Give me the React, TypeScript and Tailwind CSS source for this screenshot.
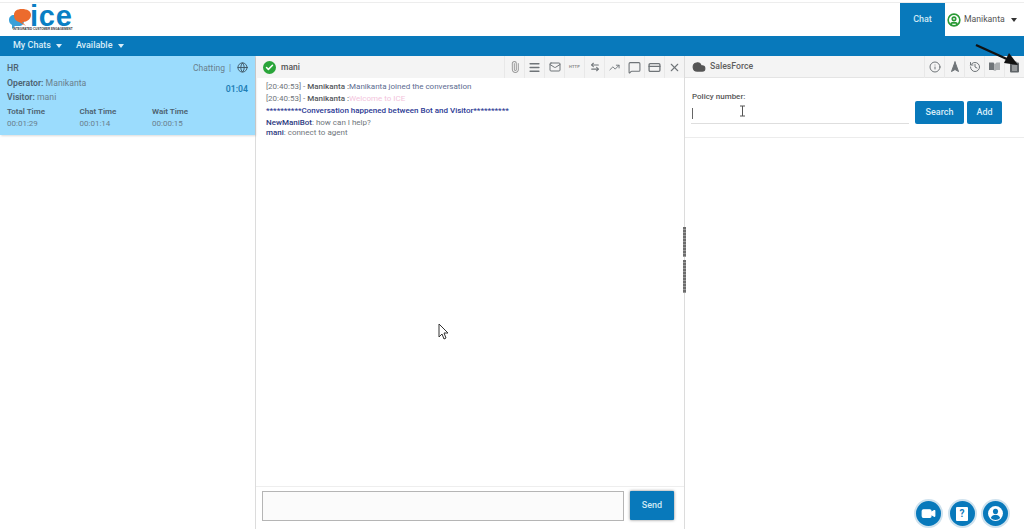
import {
  Paperclip,
  Menu,
  Mail,
  ArrowLeftRight,
  TrendingUp,
  MessageSquare,
  CreditCard,
  X,
  Globe,
  Info,
  Navigation2,
  History,
  Cloud,
  Check,
  CircleUser,
  Video,
} from "lucide-react";

function Caret({ className }: { className: string }) {
  return <span className={`inline-block h-0 w-0 border-x-[3.5px] border-t-[4px] border-x-transparent ${className}`} />;
}

function Logo() {
  return (
    <div className="relative ml-[9px] h-[32px] w-[68px]">
      <svg width="24" height="22" viewBox="0 0 24 22" className="absolute left-0 top-[5px]">
        <path d="M0 12c0-3 2-5 5-5h6c3 0 4 3 4 6s-2 5-5 5H6l-3 3 0-4c-2-1-3-3-3-5z" fill="#3aa0d8" />
        <path d="M5 7c0-4 3-6 8-6s9 2 9 6-4 7-8 7h-1l4 4-7-4c-3-1-5-3-5-7z" fill="#ec6b2d" />
      </svg>
      <span className="absolute left-[21px] top-0 font-['Liberation_Sans',sans-serif] text-[29px] font-bold leading-[26px] tracking-[0.8px] text-[#0a7fc4]">
        ice
      </span>
      <span className="absolute left-[4px] top-[25px] whitespace-nowrap font-['Liberation_Sans',sans-serif] text-[3px] font-bold leading-[3px] text-[#333]">
        INTEGRATED CUSTOMER ENGAGEMENT
      </span>
    </div>
  );
}

function Toolbtn({ children }: { children: React.ReactNode }) {
  return <div className="flex h-[22px] w-[20px] items-center justify-center border-l border-[#e8e8e8] text-[#6f7478]">{children}</div>;
}

function Stat({ label, value }: { label: string; value: string }) {
  return (
    <div className="w-[72.5px]">
      <div className="text-[8px] font-semibold leading-[12px] text-[#4d6270]">{label}</div>
      <div className="text-[8px] leading-[12px] text-[#6a808e]">{value}</div>
    </div>
  );
}

function RoundBtn({ children }: { children: React.ReactNode }) {
  return (
    <div className="flex h-[29px] w-[29px] items-center justify-center rounded-full border-2 border-[#cfe2ee] bg-[#0879bb] text-white">
      {children}
    </div>
  );
}

export default function App() {
  return (
    <div className="relative flex h-[529px] w-[1024px] flex-col overflow-hidden bg-white pt-[2px] font-['Roboto',sans-serif]">
      <header className="flex h-[34px] items-stretch border-t border-[#ededed]">
        <Logo />
        <div className="flex-1" />
        <div className="flex w-[45px] items-center justify-center bg-[#0879bb] text-[9px] font-medium text-[#cfe8f5]">Chat</div>
        <div className="flex w-[79px] items-center pl-[2px] text-[8.7px] text-[#555]">
          <CircleUser size={14} strokeWidth={2.8} className="text-[#2a9a35]" />
          <span className="ml-[3px]">Manikanta</span>
          <Caret className="ml-[6px] border-t-[#333]" />
        </div>
      </header>

      <nav className="flex h-[20px] items-center bg-[#0879bb] pl-[13px] text-[9px] font-medium text-[#d8edf8]">
        <span>My Chats</span>
        <Caret className="ml-[5px] border-t-[#d8edf8]" />
        <span className="ml-[14px]">Available</span>
        <Caret className="ml-[5px] border-t-[#d8edf8]" />
      </nav>

      <main className="flex min-h-0 flex-1">
        <aside className="w-[256px] shrink-0 border-r border-[#dcdcdc]">
          <div className="h-[79px] bg-[#9bdcfd] px-[7px] pt-[6px] shadow-[1px_1px_2px_rgba(0,0,0,0.15)]">
            <div className="flex items-center justify-between text-[8.7px] font-medium leading-[12px] text-[#4d6270]">
              <span>HR</span>
              <span className="flex items-center text-[8.5px] font-normal text-[#6a808e]">
                Chatting
                <span className="ml-[4px] mr-[6px]">|</span>
                <Globe size={11} className="-mt-[2px] text-[#3e5563]" />
              </span>
            </div>
            <div className="mt-[2px] flex items-center justify-between">
              <div>
                <div className="text-[8.7px] leading-[14px] text-[#6a808e]"><span className="font-semibold text-[#4d6270]">Operator:</span> Manikanta</div>
                <div className="text-[8.7px] leading-[14px] text-[#6a808e]"><span className="font-semibold text-[#4d6270]">Visitor:</span> mani</div>
              </div>
              <span className="text-[8.7px] font-semibold text-[#1e7fb6]">01:04</span>
            </div>
            <div className="mt-[2px] flex">
              <Stat label="Total Time" value="00:01:29" />
              <Stat label="Chat Time" value="00:01:14" />
              <Stat label="Wait Time" value="00:00:15" />
            </div>
          </div>
        </aside>

        <section className="relative flex w-[429px] shrink-0 flex-col border-r border-[#dcdcdc]">
          <div className="flex h-[22px] items-center bg-[#f4f4f4] pl-[7px]">
            <span className="flex h-[13px] w-[13px] items-center justify-center rounded-full bg-[#2aa53a] text-white">
              <Check size={9} strokeWidth={4} />
            </span>
            <span className="ml-[5px] pt-[1px] text-[8.5px] font-medium text-[#555]">mani</span>
            <div className="ml-auto flex">
              <Toolbtn><Paperclip size={12} className="rotate-[-45deg] text-[#9a9a9a]" /></Toolbtn>
              <Toolbtn><Menu size={13} strokeWidth={3} /></Toolbtn>
              <Toolbtn><Mail size={12} /></Toolbtn>
              <Toolbtn><span className="text-[4px] font-bold tracking-[0.2px] text-[#888]">HTTP</span></Toolbtn>
              <Toolbtn><ArrowLeftRight size={10} strokeWidth={2.6} /></Toolbtn>
              <Toolbtn><TrendingUp size={11} /></Toolbtn>
              <Toolbtn><MessageSquare size={13} /></Toolbtn>
              <Toolbtn><CreditCard size={13} strokeWidth={2.4} /></Toolbtn>
              <Toolbtn><X size={13} /></Toolbtn>
            </div>
          </div>

          <div className="flex-1 pl-[10px] pt-[2px] text-[8px] text-[#70767c]">
            <div className="leading-[13px]">[20:40:53] - <b className="font-medium text-[#55595d]">Manikanta :</b><span className="text-[#5b6b90]">Manikanta joined the conversation</span></div>
            <div className="leading-[12px]">[20:40:53] - <b className="font-medium text-[#55595d]">Manikanta :</b><span className="text-[#f3c4dc]">Welcome to ICE</span></div>
            <div className="font-medium leading-[12px] text-[#2c3a94]">**********Conversation happened between Bot and Visitor**********</div>
            <div className="mt-[1px] leading-[10px]"><b className="font-medium text-[#2c3a80]">NewManiBot</b>: how can I help?</div>
            <div className="leading-[10px]"><b className="font-medium text-[#2c3a80]">mani</b>: connect to agent</div>
          </div>

          <div className="flex h-[43px] items-start border-t border-[#eeeeee] pl-[6px] pt-[4px]">
            <div className="h-[30px] w-[362px] border border-[#b5b5b5] bg-[#fbfbfb]" />
            <button className="ml-[6px] h-[29px] w-[44px] rounded-[1px] bg-[#0879bb] text-[9px] font-medium text-[#cfe8f5] shadow-[0_0_3px_rgba(0,0,0,0.5)]">Send</button>
          </div>

          {/* splitter handle */}
          <div className="absolute right-[-2px] top-[171px] flex w-[3px] flex-col gap-[3px]">
            <div className="h-[30px] bg-[repeating-linear-gradient(#6d6d6d_0_2px,#9a9a9a_2px_3px)]" />
            <div className="h-[33px] bg-[repeating-linear-gradient(#6d6d6d_0_2px,#9a9a9a_2px_3px)]" />
          </div>
        </section>

        <section className="relative flex min-w-0 flex-1 flex-col">
          <div className="flex h-[22px] items-center border-b border-[#e4e4e4] bg-[#f4f4f4] pl-[7px]">
            <Cloud size={14} fill="#555" className="text-[#555]" />
            <span className="ml-[4px] pt-[1px] text-[8.7px] font-medium text-[#5f5f5f]">SalesForce</span>
            <div className="ml-auto flex">
              <Toolbtn><Info size={12} /></Toolbtn>
              <Toolbtn><Navigation2 size={12} fill="#6f7478" /></Toolbtn>
              <Toolbtn><History size={12} /></Toolbtn>
              <Toolbtn>
                <svg width="13" height="11" viewBox="0 0 13 11">
                  <path d="M1 1.5h4.5L6.5 3v7L5.5 9H1z" fill="#6f7478" />
                  <path d="M12 1.5H8.5L7 3v7l1.5-1H12z" fill="#6f7478" opacity="0.55" />
                </svg>
              </Toolbtn>
              <Toolbtn>
                <svg width="11" height="12" viewBox="0 0 11 12">
                  <rect x="1" y="1.5" width="9" height="10" rx="1" fill="#5f6468" />
                  <rect x="3.5" y="0.5" width="4" height="2" fill="#5f6468" />
                  <path d="M3 5h5M3 7h5M3 9h5" stroke="#e8e8e8" strokeWidth="0.8" />
                </svg>
              </Toolbtn>
            </div>
          </div>
          <div className="flex h-[60px] items-start border-b border-[#ececec] pl-[6px]">
            <div className="w-[218px] pt-[13px]">
              <div className="pl-[1px] text-[8px] font-medium leading-[11px] text-[#555]">Policy number:</div>
              <div className="mt-[2px] flex h-[20px] items-center border-b border-[#dedede] pl-[1px]">
                <span className="h-[11px] w-px bg-[#666]" />
              </div>
            </div>
            <button className="ml-[6px] mt-[23px] h-[23px] w-[49px] rounded-[2px] bg-[#0879bb] text-[9px] font-medium text-[#d8edf8]">Search</button>
            <button className="ml-[3px] mt-[23px] h-[23px] w-[35px] rounded-[2px] bg-[#0879bb] text-[9px] font-medium text-[#d8edf8]">Add</button>
          </div>
          <div className="mt-auto flex justify-end gap-[4.5px] pb-[1px] pr-[14px]">
            <RoundBtn><Video size={15} fill="white" /></RoundBtn>
            <RoundBtn>
              <span className="flex h-[14px] w-[12px] items-center justify-center rounded-[1px] bg-white text-[10px] font-bold leading-none text-[#0879bb]">?</span>
            </RoundBtn>
            <RoundBtn>
              <svg width="17" height="17" viewBox="0 0 16 16">
                <circle cx="8" cy="8" r="7" fill="white" />
                <circle cx="8" cy="6" r="2.4" fill="#0879bb" />
                <path d="M3.6 12.2c.8-2 2.5-3 4.4-3s3.6 1 4.4 3c-1.1 1.1-2.7 1.8-4.4 1.8s-3.3-.7-4.4-1.8z" fill="#0879bb" />
              </svg>
            </RoundBtn>
          </div>
        </section>
      </main>

      {/* annotation arrow */}
      <svg width="50" height="30" viewBox="0 0 50 30" className="absolute left-[973px] top-[42px]">
        <path d="M3 3L36 18" stroke="#111" strokeWidth="2.4" />
        <path d="M45 23L31 21L36 11Z" fill="#111" />
      </svg>
      {/* text cursor */}
      <svg width="7" height="12" viewBox="0 0 7 12" className="absolute left-[739px] top-[105px]">
        <path d="M1 1h5M3.5 1v10M1 11h5" stroke="#555" strokeWidth="1" fill="none" />
      </svg>
      {/* mouse pointer */}
      <svg width="12" height="18" viewBox="0 0 12 18" className="absolute left-[438px] top-[323px]">
        <path d="M1 1v13l3-3 2 5 2-1-2-5h4z" fill="white" stroke="#333" strokeWidth="1" />
      </svg>
    </div>
  );
}
